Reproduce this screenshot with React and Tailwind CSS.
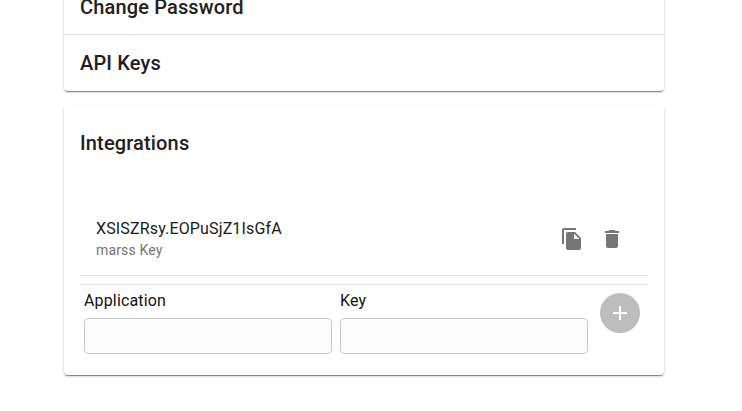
const cardShadow = 'shadow-[0_2px_1px_-1px_rgba(0,0,0,0.3),0_1px_1px_0_rgba(0,0,0,0.14),0_1px_3px_0_rgba(0,0,0,0.2)]';

const CopyIcon = () => (
  <svg viewBox="0 0 24 24" className="w-6 h-6" fill="#757575">
    <path d="M16 1H4c-1.1 0-2 .9-2 2v14h2V3h12V1zm-1 4l6 6v10c0 1.1-.9 2-2 2H7.99C6.89 23 6 22.1 6 21l.01-14c0-1.1.89-2 1.99-2h7zm-1 7h5.5L14 6.5V12z" />
  </svg>
);

const TrashIcon = () => (
  <svg viewBox="0 0 24 24" className="w-6 h-6" fill="#757575">
    <path d="M6 19c0 1.1.9 2 2 2h8c1.1 0 2-.9 2-2V7H6v12zM19 4h-3.5l-1-1h-5l-1 1H5v2h14V4z" />
  </svg>
);

const PlusIcon = () => (
  <svg viewBox="0 0 24 24" className="w-6 h-6" fill="#ffffff">
    <path d="M19 13h-6v6h-2v-6H5v-2h6V5h2v6h6v2z" />
  </svg>
);

const Field = ({ label }) => (
  <div className="w-[248px] flex flex-col">
    <label className="h-[33px] pt-[6px] text-[16px] leading-[20px] tracking-[0.15px] text-[#111111]">{label}</label>
    <input type="text" className="h-[36px] rounded-[4px] border border-[#c8c8c8] bg-[#fcfcfc]" />
  </div>
);

const App = () => {
  return (
    <div className="h-[411px] overflow-hidden bg-white font-['Roboto',sans-serif] text-[#212121]">
      <div className="w-[600px] ml-[64px] -mt-[21px]">
        <div className={`bg-white rounded-b-[4px] ${cardShadow}`}>
          <div className="h-[56px] px-4 flex items-center border-b border-[#dcdcdc] text-[20px] tracking-[0.15px] font-medium">Change Password</div>
          <div className="h-[56px] px-4 flex items-center text-[20px] tracking-[0.15px] font-medium">API Keys</div>
        </div>

        <div className={`mt-[15px] h-[269px] bg-white rounded-[4px] px-4 ${cardShadow}`}>
          <h2 className="pt-[24px] text-[20px] leading-[26px] tracking-[0.15px] font-medium">Integrations</h2>
          <div className="mt-[57px] h-[63px] pl-4 flex items-start justify-between border-b border-[#e0e0e0]">
            <div className="mt-[4px]">
              <div className="text-[16px] leading-[24px] tracking-[0.15px] text-[#1a1a1a]">XSISZRsy.EOPuSjZ1IsGfA</div>
              <div className="text-[14px] leading-[18px] tracking-[0.15px] text-[#757575]">marss Key</div>
            </div>
            <div className="flex gap-4 mr-6 mt-[14px]">
              <CopyIcon />
              <TrashIcon />
            </div>
          </div>
          <div className="mt-[8px] border-t border-[#e8e8e8] pl-1 flex gap-2">
            <Field label="Application" />
            <Field label="Key" />
            <button className="ml-1 mt-2 w-10 h-10 rounded-full bg-[#bdbdbd] flex items-center justify-center">
              <PlusIcon />
            </button>
          </div>
        </div>
      </div>
    </div>
  );
};

export default App;
